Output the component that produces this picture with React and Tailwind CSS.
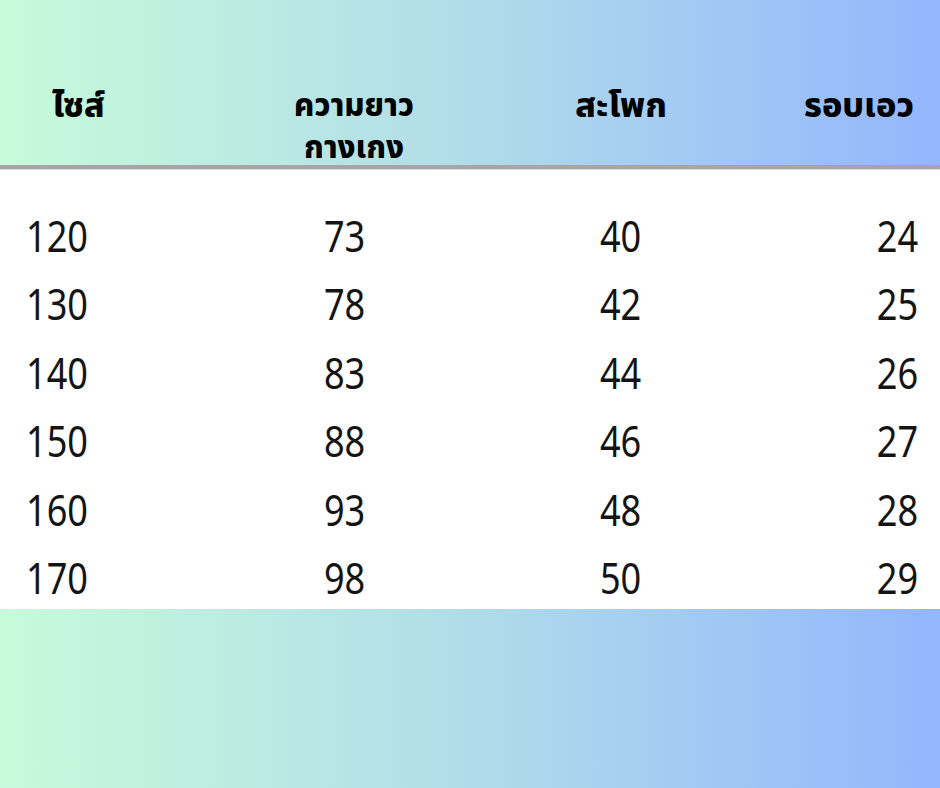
import React from 'react';

const rows = [
  ['120', '73', '40', '24'],
  ['130', '78', '42', '25'],
  ['140', '83', '44', '26'],
  ['150', '88', '46', '27'],
  ['160', '93', '48', '28'],
  ['170', '98', '50', '29'],
];

const band = 'bg-gradient-to-r from-[#c7fbd9] via-[#b2dbe9] to-[#93b6fc]';

function App() {
  return (
    <div className="w-[940px] h-[788px] overflow-hidden bg-white font-['Noto_Sans',sans-serif]">
      <div className={`${band} h-[165px] pt-[86px]`}>
        <div className="grid grid-cols-[250px_190px_362px_1fr] text-[34px] font-extrabold leading-[41px] text-black font-['Noto_Sans_Thai','Noto_Sans',sans-serif]">
          <div className="pl-[52px]">ไซส์</div>
          <div className="text-center pl-[18px] text-[31px] leading-[42px]">
            ความยาว
            <br />
            กางเกง
          </div>
          <div className="text-center">สะโพก</div>
          <div className="text-right pr-[26px]">รอบเอว</div>
        </div>
      </div>
      <div className="h-[4px] bg-[#a3a7a5]" />
      <div className="h-[1px] bg-[#dcdedd]" />

      <div className="h-[439px] bg-white pt-[32px] overflow-hidden">
        {rows.map((r) => (
          <div
            key={r[0]}
            className="grid grid-cols-[250px_190px_362px_1fr] text-[43px] leading-[68.4px] text-[#141414]"
          >
            <div className="pl-[26px]">
              <span className="inline-block scale-x-[0.84] origin-left">{r[0]}</span>
            </div>
            <div className="text-center">
              <span className="inline-block scale-x-[0.84]">{r[1]}</span>
            </div>
            <div className="text-center">
              <span className="inline-block scale-x-[0.84]">{r[2]}</span>
            </div>
            <div className="text-right pr-[22px]">
              <span className="inline-block scale-x-[0.84] origin-right">{r[3]}</span>
            </div>
          </div>
        ))}
      </div>

      <div className={`${band} h-[179px]`} />
    </div>
  );
}

export default App;
